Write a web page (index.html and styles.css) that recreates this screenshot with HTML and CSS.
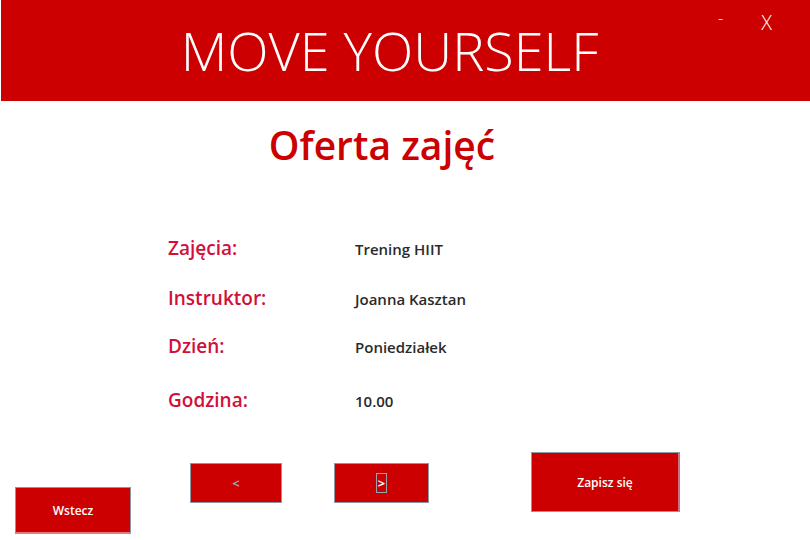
FILE: index.html
```html
<!DOCTYPE html>
<html lang="pl">
<head>
<meta charset="utf-8">
<title>Move Yourself - Oferta zajęć</title>
<link rel="stylesheet" href="styles.css">
</head>
<body>
<div class="window">
  <header class="topbar">
    <h1 class="brand">MOVE YOURSELF</h1>
    <div class="controls">
      <span class="ctl ctl-min">-</span>
      <span class="ctl ctl-close">X</span>
    </div>
  </header>
  <main class="content">
    <h2 class="title">Oferta zajęć</h2>
    <div class="details">
      <div class="row">
        <span class="label">Zajęcia:</span>
        <span class="value">Trening HIIT</span>
      </div>
      <div class="row">
        <span class="label">Instruktor:</span>
        <span class="value">Joanna Kasztan</span>
      </div>
      <div class="row">
        <span class="label">Dzień:</span>
        <span class="value">Poniedziałek</span>
      </div>
      <div class="row row-last">
        <span class="label">Godzina:</span>
        <span class="value">10.00</span>
      </div>
    </div>
    <div class="actions">
      <button class="btn btn-back">Wstecz</button>
      <button class="btn btn-nav btn-prev">&lt;</button>
      <button class="btn btn-nav btn-next"><span class="focus">&gt;</span></button>
      <button class="btn btn-save">Zapisz się</button>
    </div>
  </main>
</div>
</body>
</html>
```

FILE: styles.css
```css
* { box-sizing: border-box; }
html, body {
  margin: 0;
  padding: 0;
  background: #ffffff;
}
body {
  font-family: "Open Sans", "Noto Sans", sans-serif;
  width: 810px;
  height: 540px;
  overflow: hidden;
}
.window {
  width: 810px;
  height: 540px;
  padding-left: 1px;
  display: flex;
  flex-direction: column;
}
.topbar {
  position: relative;
  height: 101px;
  background: #cc0000;
  display: flex;
  justify-content: center;
  padding-right: 32px;
  padding-top: 14px;
}
.brand {
  margin: 0;
  font-weight: 300;
  font-size: 54px;
  line-height: 72px;
  color: #ffffff;
  letter-spacing: 0;
}
.controls {
  position: absolute;
  top: 6px;
  right: 38px;
  display: flex;
  gap: 38px;
  color: #ffffff;
  font-weight: 300;
  font-size: 20px;
  line-height: 34px;
}
.ctl-min { font-size: 16px; line-height: 24px; }
.content {
  flex: 1;
  display: flex;
  flex-direction: column;
}
.title {
  margin: 19px 47px 0 0;
  text-align: center;
  font-size: 39px;
  font-weight: 600;
  color: #cc0000;
  line-height: 50px;
}
.details {
  margin-top: 63px;
  margin-left: 167px;
  display: flex;
  flex-direction: column;
}
.row {
  display: grid;
  grid-template-columns: 187px auto;
  align-items: baseline;
  height: 50px;
}
.row:nth-child(2) { height: 48px; }
.row-last { margin-top: 4px; }
.label {
  font-size: 19px;
  font-weight: 600;
  color: #d0103a;
  line-height: 30px;
}
.value {
  font-size: 15px;
  font-weight: 600;
  color: #2a2a2a;
  line-height: 30px;
}
.actions {
  margin-top: 17px;
  display: flex;
  align-items: flex-start;
}
.btn {
  font-family: "Open Sans", "Noto Sans", sans-serif;
  background: #cc0000;
  border: 1px solid #8c98a4;
  color: #ffffff;
  font-weight: 600;
  font-size: 12px;
  padding: 0;
  display: flex;
  align-items: center;
  justify-content: center;
}
.btn-back {
  width: 116px;
  height: 47px;
  margin-top: 35px;
  margin-left: 14px;
  border-bottom: 2px solid #e07a80;
}
.btn-nav {
  width: 92px;
  height: 40px;
  margin-top: 11px;
  font-size: 13px;
  font-weight: 700;
}
.btn-prev {
  margin-left: 59px;
  color: #a3a3b0;
}
.btn-next {
  margin-left: 52px;
  width: 95px;
}
.focus {
  display: inline-block;
  border: 1px solid #9aa4b0;
  padding: 0 1px;
  line-height: 18px;
}
.btn-save {
  margin-left: 102px;
  width: 149px;
  height: 60px;
  border-right: 2px solid #d07080;
}
```
